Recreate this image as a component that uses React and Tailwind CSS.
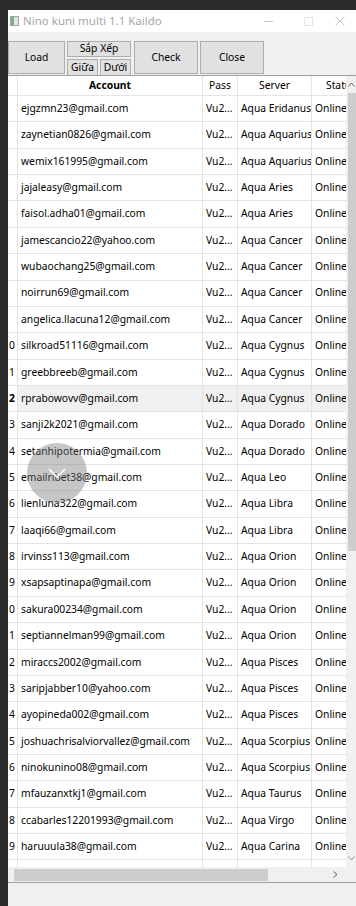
import React from "react";

const rows = [
  ["ejgzmn23@gmail.com", "Aqua Eridanus"],
  ["zaynetian0826@gmail.com", "Aqua Aquarius"],
  ["wemix161995@gmail.com", "Aqua Aquarius"],
  ["jajaleasy@gmail.com", "Aqua Aries"],
  ["faisol.adha01@gmail.com", "Aqua Aries"],
  ["jamescancio22@yahoo.com", "Aqua Cancer"],
  ["wubaochang25@gmail.com", "Aqua Cancer"],
  ["noirrun69@gmail.com", "Aqua Cancer"],
  ["angelica.llacuna12@gmail.com", "Aqua Cancer"],
  ["silkroad51116@gmail.com", "Aqua Cygnus"],
  ["greebbreeb@gmail.com", "Aqua Cygnus"],
  ["rprabowovv@gmail.com", "Aqua Cygnus"],
  ["sanji2k2021@gmail.com", "Aqua Dorado"],
  ["setanhipotermia@gmail.com", "Aqua Dorado"],
  ["emailribet38@gmail.com", "Aqua Leo"],
  ["lienluna322@gmail.com", "Aqua Libra"],
  ["laaqi66@gmail.com", "Aqua Libra"],
  ["irvinss113@gmail.com", "Aqua Orion"],
  ["xsapsaptinapa@gmail.com", "Aqua Orion"],
  ["sakura00234@gmail.com", "Aqua Orion"],
  ["septiannelman99@gmail.com", "Aqua Orion"],
  ["miraccs2002@gmail.com", "Aqua Pisces"],
  ["saripjabber10@yahoo.com", "Aqua Pisces"],
  ["ayopineda002@gmail.com", "Aqua Pisces"],
  ["joshuachrisalviorvallez@gmail.com", "Aqua Scorpius"],
  ["ninokunino08@gmail.com", "Aqua Scorpius"],
  ["mfauzanxtkj1@gmail.com", "Aqua Taurus"],
  ["ccabarles12201993@gmail.com", "Aqua Virgo"],
  ["haruuula38@gmail.com", "Aqua Carina"],
  ["", ""],
];

// ô lệnh kiểu WinForms
const WinButton = ({ children, className = "" }) => (
  <div className={`flex items-center justify-center bg-[#e1e1e1] border border-[#adadad] text-black ${className}`}>
    {children}
  </div>
);

export default function App() {
  return (
    <div className="w-[356px] h-[906px] bg-[#2b2b2b] flex flex-col overflow-hidden relative font-['Noto_Sans','Open_Sans',sans-serif] text-[10.3px]">
      <div className="h-[10px] shrink-0" />
      <div className="flex-1 flex min-h-0">
        <div className="w-[8px] shrink-0" />
        <div className="flex-1 flex flex-col bg-[#f0f0f0] min-w-0">
          {/* title bar */}
          <div className="h-[22px] shrink-0 bg-white flex items-center pl-[2px]">
            <div className="w-[9px] h-[10px] border border-[#9aa5a0] bg-[#dfe8e2] flex items-start">
              <div className="w-[3px] h-[8px] bg-[#7fae8c]" />
            </div>
            <span className="ml-[4px] text-[11.5px] text-[#a6a6a6]">Nino kuni multi 1.1 Kaildo</span>
            <div className="flex-1" />
            <div className="w-[40px] flex justify-center"><div className="w-[9px] h-px bg-[#c8c8c8]" /></div>
            <div className="w-[40px] flex justify-center"><div className="w-[9px] h-[9px] border border-[#e3e3e3]" /></div>
            <div className="w-[28px] flex justify-start pl-[7px]">
              <svg width="10" height="10" viewBox="0 0 10 10"><path d="M0.5 0.5L9.5 9.5M9.5 0.5L0.5 9.5" stroke="#c4c4c4" strokeWidth="1" /></svg>
            </div>
          </div>

          {/* toolbar */}
          <div className="h-[43px] shrink-0 flex items-start pt-[9px] gap-[2px]">
            <WinButton className="w-[57px] h-[33px]">Load</WinButton>
            <div className="w-[64px] h-[33px] flex flex-col gap-[2px]">
              <WinButton className="h-[16px]">Sắp Xếp</WinButton>
              <div className="flex-1 flex gap-[2px]">
                <WinButton className="flex-1">Giữa</WinButton>
                <WinButton className="flex-1">Dưới</WinButton>
              </div>
            </div>
            <WinButton className="w-[64px] h-[33px] ml-[1px]">Check</WinButton>
            <WinButton className="w-[64px] h-[33px]">Close</WinButton>
          </div>

          {/* grid */}
          <div className="h-[792px] shrink-0 flex bg-white border-t border-[#a0a0a0]">
            <div className="w-[338px] overflow-hidden">
              <div className="h-[20px] flex items-center border-b border-[#e5e5e5]">
                <div className="w-[10px] h-full border-r border-[#e5e5e5]" />
                <div className="w-[185px] h-full flex items-center justify-center font-bold border-r border-[#e5e5e5]">Account</div>
                <div className="w-[35px] h-full flex items-center justify-center border-r border-[#e5e5e5]">Pass</div>
                <div className="w-[74px] h-full flex items-center justify-center border-r border-[#e5e5e5]">Server</div>
                <div className="w-[34px] h-full flex items-center pl-[14px] whitespace-nowrap overflow-hidden">Status</div>
              </div>
              {rows.map(([acc, server], i) => {
                const n = i + 1;
                const sel = n === 12;
                return (
                  <div key={i} className={`h-[26.36px] flex items-center border-b border-[#e3e3e3] ${sel ? "bg-[#f0f0f0]" : ""}`}>
                    <div className={`w-[10px] h-full flex items-center pl-[1px] border-r border-[#e3e3e3] bg-white ${sel ? "font-bold" : ""}`}>
                      {n >= 10 && acc ? String(n % 10) : ""}
                    </div>
                    <div className="w-[185px] h-full flex items-center pl-[3px] border-r border-[#e3e3e3] whitespace-nowrap overflow-hidden">{acc}</div>
                    <div className="w-[35px] h-full flex items-center pl-[3px] border-r border-[#e3e3e3] whitespace-nowrap overflow-hidden">{acc ? "Vu2..." : ""}</div>
                    <div className="w-[74px] h-full flex items-center pl-[3px] border-r border-[#e3e3e3] whitespace-nowrap overflow-hidden">{server}</div>
                    <div className="w-[34px] h-full flex items-center pl-[3px] whitespace-nowrap overflow-hidden">{acc ? "Online" : ""}</div>
                  </div>
                );
              })}
            </div>
            {/* vertical scrollbar */}
            <div className="flex-1 bg-[#f0f0f0] flex flex-col">
              <div className="h-[17px] flex items-center justify-end pr-[1px]">
                <svg width="7" height="5" viewBox="0 0 7 5"><path d="M0.5 4.5L3.5 1L6.5 4.5" stroke="#606060" fill="none" /></svg>
              </div>
              <div className="h-[458px] ml-[2px] bg-[#cdcdcd]" />
              <div className="flex-1" />
              <div className="h-[17px] flex items-center justify-end pr-[1px]">
                <svg width="7" height="5" viewBox="0 0 7 5"><path d="M0.5 0.5L3.5 4L6.5 0.5" stroke="#909090" fill="none" /></svg>
              </div>
            </div>
          </div>

          {/* horizontal scrollbar */}
          <div className="h-[15px] shrink-0 flex items-center bg-[#f0f0f0]">
            <div className="w-[6px]" />
            <div className="w-[254px] h-[12px] bg-[#cdcdcd]" />
            <div className="w-[70px] flex justify-end">
              <svg width="5" height="7" viewBox="0 0 5 7"><path d="M0.5 0.5L4 3.5L0.5 6.5" stroke="#606060" fill="none" /></svg>
            </div>
            <div className="flex-1 h-full bg-[#f0f0f0]" />
          </div>
          <div className="h-px shrink-0 bg-[#a0a0a0]" />
          <div className="flex-1 bg-[#f0f0f0]" />
        </div>
      </div>

      {/* nút nổi */}
      <div className="absolute left-[27px] top-[443px] w-[60px] h-[60px] rounded-full bg-[rgba(120,120,120,0.42)] flex items-center justify-center">
        <svg width="18" height="10" viewBox="0 0 18 10"><path d="M1 1L9 9L17 1" stroke="white" strokeWidth="1.5" fill="none" /></svg>
      </div>
    </div>
  );
}
